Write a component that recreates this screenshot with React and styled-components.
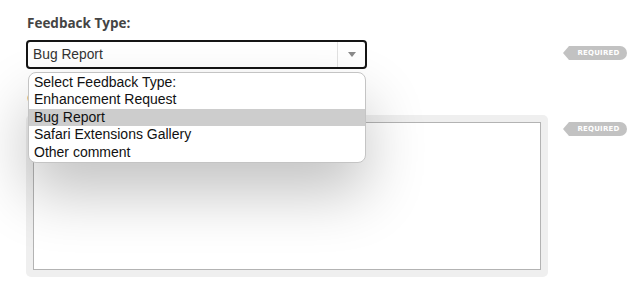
import React from "react";
import styled, { createGlobalStyle } from "styled-components";

const options = [
  "Select Feedback Type:",
  "Enhancement Request",
  "Bug Report",
  "Safari Extensions Gallery",
  "Other comment",
];

const FeedbackForm = () => {
  const selected = "Bug Report";

  return (
    <>
      <GlobalStyle />
      <Form>
        <FieldRow>
          <Field>
            <Label>Feedback Type:</Label>
            <SelectWrap>
              <SelectBox>
                <SelectValue>{selected}</SelectValue>
                <ArrowCell>
                  <Arrow />
                </ArrowCell>
              </SelectBox>
              <OptionList>
                {options.map((opt) => (
                  <Option key={opt} $active={opt === selected}>
                    {opt}
                  </Option>
                ))}
              </OptionList>
            </SelectWrap>
          </Field>
          <Badge $top={32}>Required</Badge>
        </FieldRow>

        <FieldRow>
          <Field>
            <Label>Comments:</Label>
            <TextWell>
              <TextArea />
            </TextWell>
          </Field>
          <Badge $top={33}>Required</Badge>
        </FieldRow>
      </Form>
    </>
  );
};

// Styled Components
const GlobalStyle = createGlobalStyle`
  html, body {
    margin: 0;
    padding: 0;
    background: #ffffff;
  }
  body {
    font-family: "Liberation Sans", Arial, sans-serif;
  }
`;

const Form = styled.form`
  padding: 14px 0 0 26px;
  display: flex;
  flex-direction: column;
  gap: 20px;
`;

const FieldRow = styled.div`
  display: grid;
  grid-template-columns: 522px auto;
  column-gap: 15px;
  align-items: start;
`;

const Field = styled.div`
  display: flex;
  flex-direction: column;
  gap: 8px;
  position: relative;
`;

const Label = styled.label`
  font-family: "Open Sans", sans-serif;
  font-weight: 700;
  font-size: 13.5px;
  line-height: 18px;
  height: 18px;
  color: #444444;
  padding-left: 1px;
`;

const SelectWrap = styled.div`
  position: relative;
  width: 341px;
  z-index: 2;
`;

const SelectBox = styled.div`
  box-sizing: border-box;
  height: 29px;
  display: flex;
  align-items: stretch;
  border: 2px solid #151515;
  border-radius: 4px;
  background: #ffffff;
`;

const SelectValue = styled.div`
  flex: 1;
  display: flex;
  align-items: center;
  padding-left: 5px;
  font-size: 13.8px;
  color: #333333;
`;

const ArrowCell = styled.div`
  width: 27px;
  border-left: 1px solid #e2e2e2;
  display: flex;
  align-items: center;
  justify-content: center;
`;

const Arrow = styled.span`
  width: 0;
  height: 0;
  border-left: 4.5px solid transparent;
  border-right: 4.5px solid transparent;
  border-top: 5px solid #8a8a8a;
`;

const OptionList = styled.ul`
  position: absolute;
  top: 32px;
  left: 2px;
  width: 338px;
  box-sizing: border-box;
  margin: 0;
  padding: 1px 0;
  list-style: none;
  background: #ffffff;
  border: 1px solid #c4c4c4;
  border-radius: 8px;
  overflow: hidden;
  box-shadow: 0 30px 60px rgba(0, 0, 0, 0.24);
`;

const Option = styled.li`
  height: 17.4px;
  line-height: 17.4px;
  padding-left: 5px;
  font-size: 14px;
  color: #111111;
  background: ${({ $active }) => ($active ? "#cdcdcd" : "transparent")};
`;

const TextWell = styled.div`
  box-sizing: border-box;
  width: 522px;
  height: 162px;
  padding: 7px;
  background: #efefef;
  border-radius: 5px;
`;

const TextArea = styled.div`
  box-sizing: border-box;
  width: 100%;
  height: 100%;
  background: #ffffff;
  border: 1px solid #b3b3b3;
`;

const Badge = styled.span`
  position: relative;
  margin-top: ${({ $top }) => $top}px;
  margin-left: 6px;
  width: 57px;
  height: 14px;
  display: flex;
  align-items: center;
  justify-content: center;
  padding-left: 1px;
  background: #c2c2c2;
  border-radius: 0 7px 7px 0;
  color: #ffffff;
  font-family: "DejaVu Sans", sans-serif;
  font-weight: 700;
  font-size: 7px;
  letter-spacing: 0.2px;
  text-transform: uppercase;

  &::before {
    content: "";
    position: absolute;
    left: -6px;
    top: 0;
    border-top: 7px solid transparent;
    border-bottom: 7px solid transparent;
    border-right: 6px solid #c2c2c2;
  }
`;

export default FeedbackForm;
